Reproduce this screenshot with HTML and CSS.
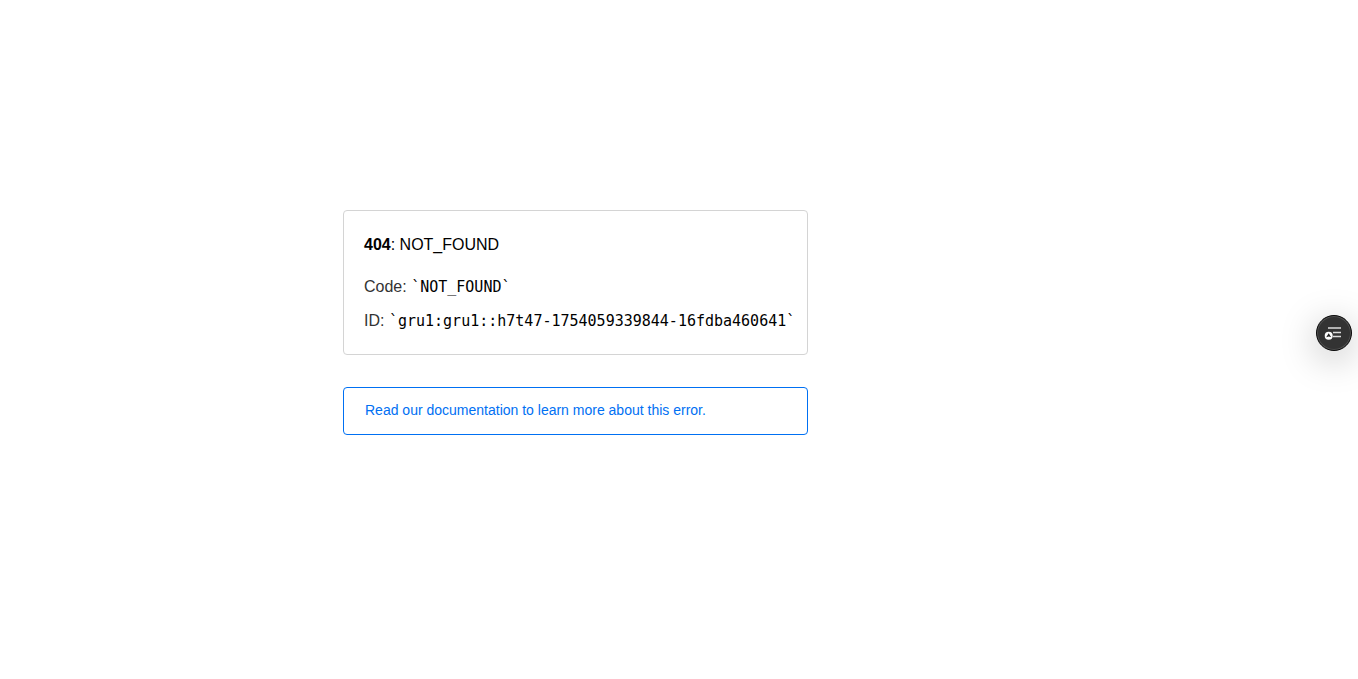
FILE: index.html
```html
<!DOCTYPE html>
<html lang="en">
<head>
<meta charset="utf-8">
<meta name="viewport" content="width=device-width, initial-scale=1">
<title>404: NOT_FOUND</title>
<link rel="stylesheet" href="styles.css">
</head>
<body>
<div class="container">
  <main class="content">
    <section class="error-card">
      <h1 class="error-title"><strong>404</strong>: NOT_FOUND</h1>
      <p class="error-row">Code: <code class="error-code">`NOT_FOUND`</code></p>
      <p class="error-row">ID: <code class="error-code">`gru1:gru1::h7t47-1754059339844-16fdba460641`</code></p>
    </section>
    <a class="docs-link" href="#">Read our documentation to learn more about this error.</a>
  </main>
</div>
<button class="assistant" type="button" aria-label="Open assistant">
  <svg class="assistant-icon" width="20" height="16" viewBox="0 0 20 16" aria-hidden="true">
    <path d="M4 3H17M9 7.5H17M9 11.5H17" stroke="#dcdcdc" stroke-width="1.4"/>
    <circle cx="4.7" cy="10.8" r="4" fill="#fff"/>
    <path d="M4.7 8.2L7.2 12.2L4.7 11.4L2.2 12.2Z" fill="#222"/>
  </svg>
</button>
</body>
</html>
```
FILE: styles.css
```css
* {
  box-sizing: border-box;
}

body {
  margin: 0;
  background: #fff;
  color: #000;
  font-family: "Liberation Sans", Arial, sans-serif;
  font-size: 16px;
  line-height: 24px;
}

.container {
  display: flex;
  justify-content: center;
  align-items: center;
  min-height: 100vh;
  padding-bottom: 34px;
}

.content {
  display: flex;
  flex-direction: column;
  gap: 32px;
  width: 100%;
  max-width: 672px;
}

.error-card,
.docs-link {
  width: 100%;
  max-width: 465px;
  border: 1px solid #d4d4d4;
  border-radius: 4px;
}

.error-card {
  padding: 22px 10px 21px 20px;
}

.error-title {
  margin: 0 0 18px;
  font-size: 16px;
  font-weight: 400;
}

.error-row {
  margin: 0;
  color: #333;
  white-space: nowrap;
}

.error-row + .error-row {
  margin-top: 10px;
}

.error-code {
  color: #000;
  font-family: "DejaVu Sans Mono", Menlo, monospace;
  font-size: 15px;
  line-height: 20px;
}

.docs-link {
  padding: 10px 21px 12px;
  border-color: #0070f3;
  color: #0070f3;
  font-size: 14px;
  text-decoration: none;
}

.assistant {
  position: fixed;
  top: 315px;
  right: 6px;
  display: flex;
  justify-content: center;
  align-items: center;
  width: 36px;
  height: 36px;
  padding: 0;
  border: 1px solid #0a0a0a;
  border-radius: 50%;
  background: #333;
  box-shadow: inset 0 0 0 1px #505050, 0 8px 36px rgba(0, 0, 0, 0.25);
}
```
